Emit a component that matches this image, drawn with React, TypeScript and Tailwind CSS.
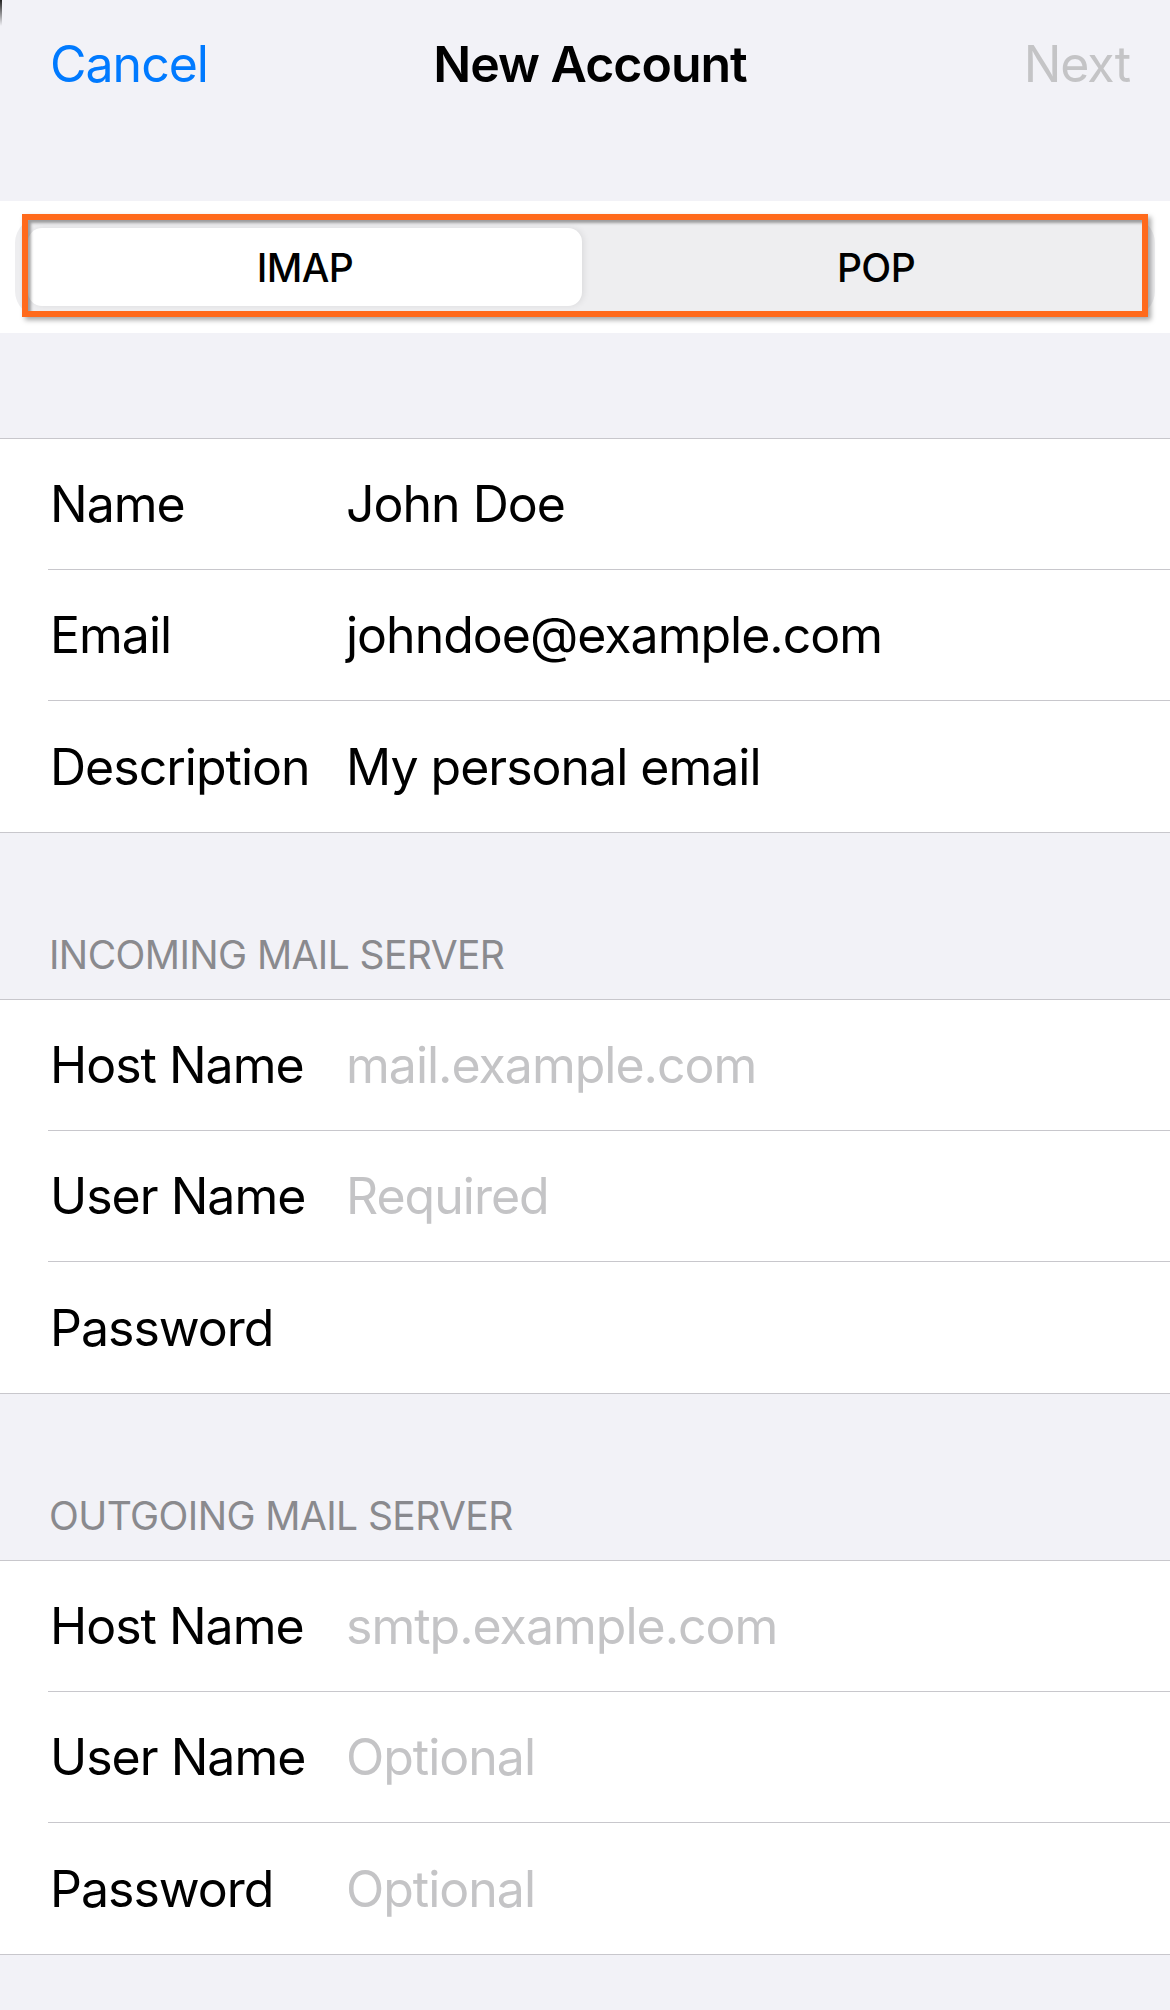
import { useState } from "react";

type Field = {
  label: string;
  value?: string;
  placeholder?: string;
};

const accountFields: Field[] = [
  { label: "Name", value: "John Doe" },
  { label: "Email", value: "johndoe@example.com" },
  { label: "Description", value: "My personal email" },
];

const incomingFields: Field[] = [
  { label: "Host Name", placeholder: "mail.example.com" },
  { label: "User Name", placeholder: "Required" },
  { label: "Password" },
];

const outgoingFields: Field[] = [
  { label: "Host Name", placeholder: "smtp.example.com" },
  { label: "User Name", placeholder: "Optional" },
  { label: "Password", placeholder: "Optional" },
];

function FieldGroup({ fields }: { fields: Field[] }) {
  return (
    <div className="border-y border-[#c8c7cc] bg-white">
      {fields.map((field, i) => (
        <div key={field.label} className="pl-[48px]">
          <div
            className={`flex h-[131px] items-center text-[50px] leading-none tracking-[-1px] ${
              i < fields.length - 1 ? "border-b border-[#c8c7cc]" : ""
            }`}
          >
            <span className="w-[298px] shrink-0 pl-[2px] text-black">{field.label}</span>
            {field.value ? (
              <span className="text-black">{field.value}</span>
            ) : (
              <span className="text-[#c4c4c6]">{field.placeholder ?? ""}</span>
            )}
          </div>
        </div>
      ))}
    </div>
  );
}

function SectionHeader({ title }: { title: string }) {
  return (
    <div className="flex h-[166px] items-end pb-[25px] pl-[49px]">
      <span className="text-[39px] leading-none tracking-[-0.6px] text-[#8a8a8e]">{title}</span>
    </div>
  );
}

export default function App() {
  const [protocol, setProtocol] = useState<"imap" | "pop">("imap");

  return (
    <main
      className="relative min-h-screen bg-[#f2f2f7] pb-[52px]"
      style={{ fontFamily: "Inter, 'Noto Sans', sans-serif" }}
    >
      <div className="absolute left-0 top-0 h-[26px] w-[2px] bg-gradient-to-b from-[#222] to-transparent" />

      {/* nav bar */}
      <div className="h-[201px]">
        <div className="grid h-[127px] grid-cols-[1fr_auto_1fr] items-center pl-[50px] pr-[40px] text-[50px] leading-none tracking-[-1px]">
          <button className="justify-self-start text-[#007aff]">Cancel</button>
          <h1 className="font-semibold text-black">New Account</h1>
          <button className="justify-self-end text-[#c4c4c6]">Next</button>
        </div>
      </div>

      {/* protocol picker */}
      <div className="bg-white py-[16px]">
        <div className="relative mx-[15px] flex h-[100px] rounded-[26px] bg-[#eeeef0] px-[13px] py-[11px] text-[39px] font-medium leading-none tracking-[-0.6px] text-black">
          <button
            onClick={() => setProtocol("imap")}
            className={`flex w-[554px] items-center justify-center rounded-[14px] ${
              protocol === "imap" ? "bg-white shadow-[2px_0_6px_rgba(0,0,0,0.08)]" : ""
            }`}
          >
            IMAP
          </button>
          <button
            onClick={() => setProtocol("pop")}
            className={`flex flex-1 items-center justify-center rounded-[14px] pl-[28px] ${
              protocol === "pop" ? "bg-white" : ""
            }`}
          >
            POP
          </button>
          <div className="pointer-events-none absolute left-[7px] top-[-3px] h-[103px] w-[1126px] border-[6px] border-[#ff6a1c] shadow-[inset_3px_3px_3px_rgba(0,0,0,0.35),3px_3px_5px_rgba(0,0,0,0.35)]" />
        </div>
      </div>

      <div className="h-[105px]" />
      <FieldGroup fields={accountFields} />

      <SectionHeader title="INCOMING MAIL SERVER" />
      <FieldGroup fields={incomingFields} />

      <SectionHeader title="OUTGOING MAIL SERVER" />
      <FieldGroup fields={outgoingFields} />
    </main>
  );
}
